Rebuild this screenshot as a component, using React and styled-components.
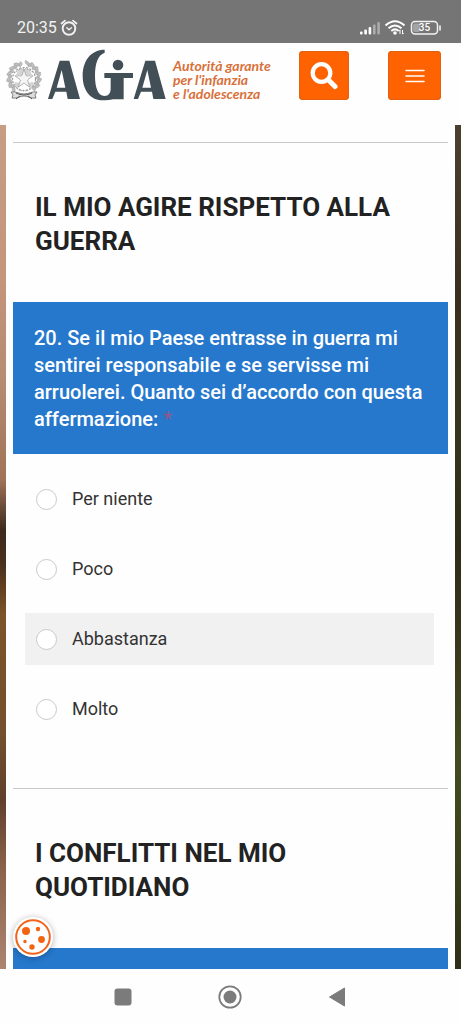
import styled, { createGlobalStyle } from "styled-components";

const options = ["Per niente", "Poco", "Abbastanza", "Molto"];
const leaves = [20, 42, 64, 86, 108, 130, 230, 252, 274, 296, 318, 340];

const App = () => {
  return (
    <Page>
      <GlobalStyle />
      <StatusBar>
        <Clock>
          20:35
          <AlarmIcon />
        </Clock>
        <StatusIcons />
      </StatusBar>

      <Header>
        <Brand href="#">
          <Emblem />
          <AgiaLogo />
          <Tagline>
            Autorità garante
            <br />
            per l'infanzia
            <br />
            e l'adolescenza
          </Tagline>
        </Brand>
        <Actions>
          <HeaderButton $width={50} aria-label="Cerca">
            <svg width="28" height="28" viewBox="0 0 28 28" fill="none" stroke="#fff">
              <circle cx="11.500" cy="11" r="8.800" strokeWidth="4.200" />
              <path d="M18.500 18 25 24.500" strokeWidth="5" strokeLinecap="round" />
            </svg>
          </HeaderButton>
          <HeaderButton $width={53} aria-label="Menu">
            <svg width="20" height="16" viewBox="0 0 20 16" stroke="#fff" strokeWidth="1.500" strokeLinecap="round">
              <path d="M1 2.500h18M1 8h18M1 13.500h18" />
            </svg>
          </HeaderButton>
        </Actions>
      </Header>

      <Backdrop>
        <Sheet>
          <Divider />
          <Title>IL MIO AGIRE RISPETTO ALLA GUERRA</Title>
          <Fieldset>
            <Question>
              20. Se il mio Paese entrasse in guerra mi sentirei responsabile e se servisse mi
              arruolerei. Quanto sei d’accordo con questa affermazione: <Required>*</Required>
            </Question>
            <Options>
              {options.map((option) => (
                <Option key={option} $active={option === "Abbastanza"}>
                  <Radio type="radio" name="q20" value={option} />
                  {option}
                </Option>
              ))}
            </Options>
          </Fieldset>
          <Divider />
          <Title>I CONFLITTI NEL MIO QUOTIDIANO</Title>
          <NextQuestion />
        </Sheet>
      </Backdrop>

      <NavBar>
        <NavButton aria-label="Recenti">
          <svg width="18" height="18" viewBox="0 0 18 18">
            <rect x="0.500" y="0.500" width="17" height="17" rx="3" fill="#7b7b7b" />
          </svg>
        </NavButton>
        <NavButton aria-label="Home">
          <svg width="24" height="24" viewBox="0 0 24 24">
            <circle cx="12" cy="12" r="10.700" fill="none" stroke="#7b7b7b" strokeWidth="1.800" />
            <circle cx="12" cy="12" r="6.500" fill="#7b7b7b" />
          </svg>
        </NavButton>
        <NavButton aria-label="Indietro">
          <svg width="18" height="20" viewBox="0 0 18 20">
            <path d="M1.500 10 16.500 1v18z" fill="#7b7b7b" stroke="#7b7b7b" strokeLinejoin="round" />
          </svg>
        </NavButton>
      </NavBar>

      <CookieButton aria-label="Preferenze cookie">
        <svg width="36" height="36" viewBox="0 0 36 36" fill="#f26410">
          <circle cx="18" cy="18" r="16.800" fill="none" stroke="#f0641c" strokeWidth="2" />
          <circle cx="11" cy="12" r="4" />
          <circle cx="23" cy="10" r="2.200" />
          <circle cx="26.500" cy="20.500" r="3.400" />
          <circle cx="10" cy="22.500" r="1.700" />
          <circle cx="17" cy="28" r="2.700" />
        </svg>
      </CookieButton>
    </Page>
  );
};

export default App;

const AlarmIcon = () => (
  <svg width="18" height="18" viewBox="0 0 18 18" fill="none" stroke="#f2f2f2" strokeLinecap="round">
    <circle cx="9" cy="9.500" r="6.300" strokeWidth="1.900" />
    <path d="M1.500 4.500 5 1.600M16.500 4.500 13 1.600" strokeWidth="1.700" />
    <path d="M6.800 8.800 9 10.800 11.400 8.800" strokeWidth="1.400" />
  </svg>
);

const StatusIcons = () => (
  <svg width="84" height="18" viewBox="0 0 84 18" fill="none" aria-label="Segnale, Wi-Fi, batteria">
    <g fill="#fff">
      <rect x="2" y="12.500" width="2.600" height="3" rx="1" />
      <rect x="6.300" y="10.500" width="2.600" height="5" rx="1" />
      <rect x="10.600" y="8" width="2.600" height="7.500" rx="1" />
      <rect x="15" y="5.500" width="2.600" height="10" rx="1" opacity=".4" />
      <rect x="19.300" y="3" width="2.600" height="12.500" rx="1" opacity=".4" />
    </g>
    <g stroke="#fff" strokeWidth="2">
      <path d="M27.500 6.500Q37-2 46.500 6.500" />
      <path d="M30.500 9.300Q37 3.600 43.500 9.300" />
      <path d="M33.300 12Q37 8.800 40.700 12" />
    </g>
    <circle cx="37" cy="14" r="1.800" fill="#fff" />
    <path d="M42 15v-4M40.800 12l1.200-1.300M44.500 11v4M45.700 14l-1.200 1.300" stroke="#fff" />
    <rect x="53.500" y="2.500" width="26" height="12.500" rx="3.500" stroke="#f2f2f2" strokeWidth="1.500" />
    <rect x="55" y="4.500" width="7" height="8.500" rx="2" fill="#a4a4a4" />
    <path d="M82 7v4" stroke="#f2f2f2" strokeWidth="1.600" strokeLinecap="round" />
    <text x="66.500" y="12.200" fill="#fff" fontSize="10" fontFamily="Roboto, sans-serif" fontWeight="500" textAnchor="middle">
      35
    </text>
  </svg>
);

const Emblem = () => (
  <svg width="36" height="42" viewBox="0 0 36 42" fill="none" stroke="#999" aria-label="Repubblica Italiana">
    <circle cx="18" cy="20" r="11.500" strokeDasharray="2 1.500" strokeWidth="1.200" />
    {leaves.map((angle) => (
      <g key={angle} transform={`rotate(${angle} 18 19)`} strokeWidth=".5">
        <path d="M18 6C14 5 13 3.500 13.500 2 17 2 19 3.500 18 6ZM18 7C21 6.500 22 4.500 20.500 2.500 18 3 17 5 18 7Z" fill="#c0c0c0" />
      </g>
    ))}
    <path d="M13 10h10l3 6H10Z" fill="#d4d4d4" stroke="none" />
    <path d="M9 23l5 1-2 6-4-4ZM27 23l-5 1 2 6 4-4Z" fill="#d4d4d4" stroke="none" />
    <path d="M18 10 20.200 16.800H27L21.600 21 23.600 28 18 24 12.400 28 14.400 21 9 16.800H15.800Z" fill="#f4f4f4" strokeWidth=".7" />
    <path d="M10 13q8-7 16 0M8 25q3 7 10 7t10-7" stroke="#999" strokeDasharray="1 1" />
    <path d="M5 33c5-1 8 2 13 2s8-3 13-2l-2 3 1 3c-5 1-8-2-12-2s-7 3-12 2l1-3Z" fill="#ddd" stroke="#666" strokeWidth=".8" />
    <path d="M10 34q8 4 16 0M14 37l-4 3M22 37l4 3" stroke="#555" />
  </svg>
);

const AgiaLogo = () => (
  <svg width="118" height="52" viewBox="145 147 354 156" fill="#434f56" aria-label="AGIA">
    <path fillRule="evenodd" d="M180 182H209L241 297H204L200 275H167L158 297H145ZM186 210 171 263H197Z" />
    <path fillRule="evenodd" d="M437 182H466L498 297H461L457 275H424L415 297H402ZM443 210 428 263H454Z" />
    <path d="M315 149V158C295 165 286 190 286 228C286 262 295 288 314 288C328 288 333 279 333 265V234H314V219H400V234H372V298H340C330 300 322 301 309 301C270 300 249 269 249 227C249 181 275 149 315 149Z" />
    <circle cx="355" cy="195" r="16" />
  </svg>
);

const GlobalStyle = createGlobalStyle`
  * {
    box-sizing: border-box;
  }
  body {
    margin: 0;
    background: #fefefe;
    color: #222;
    font-family: Roboto, sans-serif;
  }
  button {
    border: none;
    padding: 0;
    cursor: pointer;
  }
`;

const Page = styled.div`
  display: flex;
  flex-direction: column;
  height: 100vh;
`;

const StatusBar = styled.div`
  display: flex;
  justify-content: space-between;
  align-items: center;
  height: 43px;
  flex-shrink: 0;
  padding: 12px 19px 0 17px;
  background: #757575;
`;

const Clock = styled.div`
  display: flex;
  align-items: center;
  gap: 3px;
  color: #f2f2f2;
  font: 400 16px/20px Roboto, sans-serif;
`;

const Header = styled.header`
  display: flex;
  justify-content: space-between;
  align-items: flex-start;
  height: 82px;
  flex-shrink: 0;
  padding: 8px 20px 0 6px;
`;

const Brand = styled.a`
  display: flex;
  align-items: flex-start;
  gap: 6px;
  text-decoration: none;

  svg {
    flex-shrink: 0;
    margin-top: -2px;
  }
  svg:first-child {
    margin-top: 8px;
  }
`;

const Tagline = styled.span`
  padding: 8px 0 0 1px;
  color: #d8703a;
  font: italic 700 14px/14px Lato, sans-serif;
  white-space: nowrap;
`;

const Actions = styled.div`
  display: flex;
  gap: 39px;
`;

const HeaderButton = styled.button`
  display: flex;
  align-items: center;
  justify-content: center;
  width: ${({ $width }) => $width}px;
  height: 49px;
  border-radius: 4px;
  background: #ff6200;
  box-shadow: inset 0 0 0 1px #e2600f;
`;

const Backdrop = styled.main`
  display: flex;
  flex: 1;
  min-height: 0;
  padding: 0 6px;
  background:
    linear-gradient(#c79d84, #c4967c 18%, #b58b72 30%, #a17458 42%, #3e2a1e 48%, #4a2f1c 52%, #7c5427 58%, #74502d 72%, #60402c 80%, #8a624b 88%, #ac8570)
      left / 6px 100% no-repeat,
    linear-gradient(#4a4030, #3a2f1e 20%, #37361d 35%, #2e2c18 50%, #3b371d 62%, #424b1e 75%, #39401b 88%, #2f2e17)
      right / 6px 100% no-repeat;
`;

const Sheet = styled.div`
  display: flex;
  flex-direction: column;
  flex: 1;
  overflow: hidden;
  padding: 17px 7px 0;
  background: #fefefe;
`;

const Divider = styled.hr`
  width: 100%;
  height: 1px;
  flex-shrink: 0;
  margin: 0;
  border: none;
  background: #c8c8c8;
`;

const Title = styled.h2`
  margin: 0;
  padding: 47px 22px 44px;
  font: 700 26px/34px Roboto, sans-serif;
`;

const Fieldset = styled.fieldset`
  min-width: 0;
  margin: 0;
  padding: 0 0 53px;
  border: none;
`;

const Question = styled.legend`
  width: 100%;
  padding: 23px 16px 21px 21px;
  background: #2678cd;
  color: #fff;
  font: 500 20px/27px Roboto, sans-serif;
`;

const Required = styled.span`
  color: #8a5a8c;
`;

const Options = styled.div`
  display: flex;
  flex-direction: column;
  gap: 18px;
  padding: 19px 14px 0 12px;
`;

const Option = styled.label`
  display: flex;
  align-items: center;
  gap: 15px;
  height: 52px;
  padding: 0 11px;
  background: ${({ $active }) => ($active ? "#f1f1f1" : "transparent")};
  color: #333;
  font: 400 18px/26px Roboto, sans-serif;
`;

const Radio = styled.input`
  appearance: none;
  width: 21px;
  height: 21px;
  margin: 0;
  border: 1px solid #c9c9c9;
  border-radius: 50%;
  background: #fff;

  &:checked {
    border: 6px solid #2678cd;
  }
`;

const NextQuestion = styled.div`
  flex: 1;
  background: #2678cd;
`;

const NavBar = styled.nav`
  display: flex;
  justify-content: center;
  align-items: center;
  gap: 59px;
  height: 56px;
  flex-shrink: 0;
  padding-right: 2px;
`;

const NavButton = styled.button`
  display: flex;
  align-items: center;
  justify-content: center;
  width: 48px;
  height: 48px;
  background: none;
`;

const CookieButton = styled.button`
  position: fixed;
  left: 13px;
  bottom: 68px;
  display: flex;
  align-items: center;
  justify-content: center;
  width: 40px;
  height: 40px;
  border-radius: 50%;
  background: #fff;
  box-shadow: 0 1px 6px rgba(0, 0, 0, 0.3);
`;
